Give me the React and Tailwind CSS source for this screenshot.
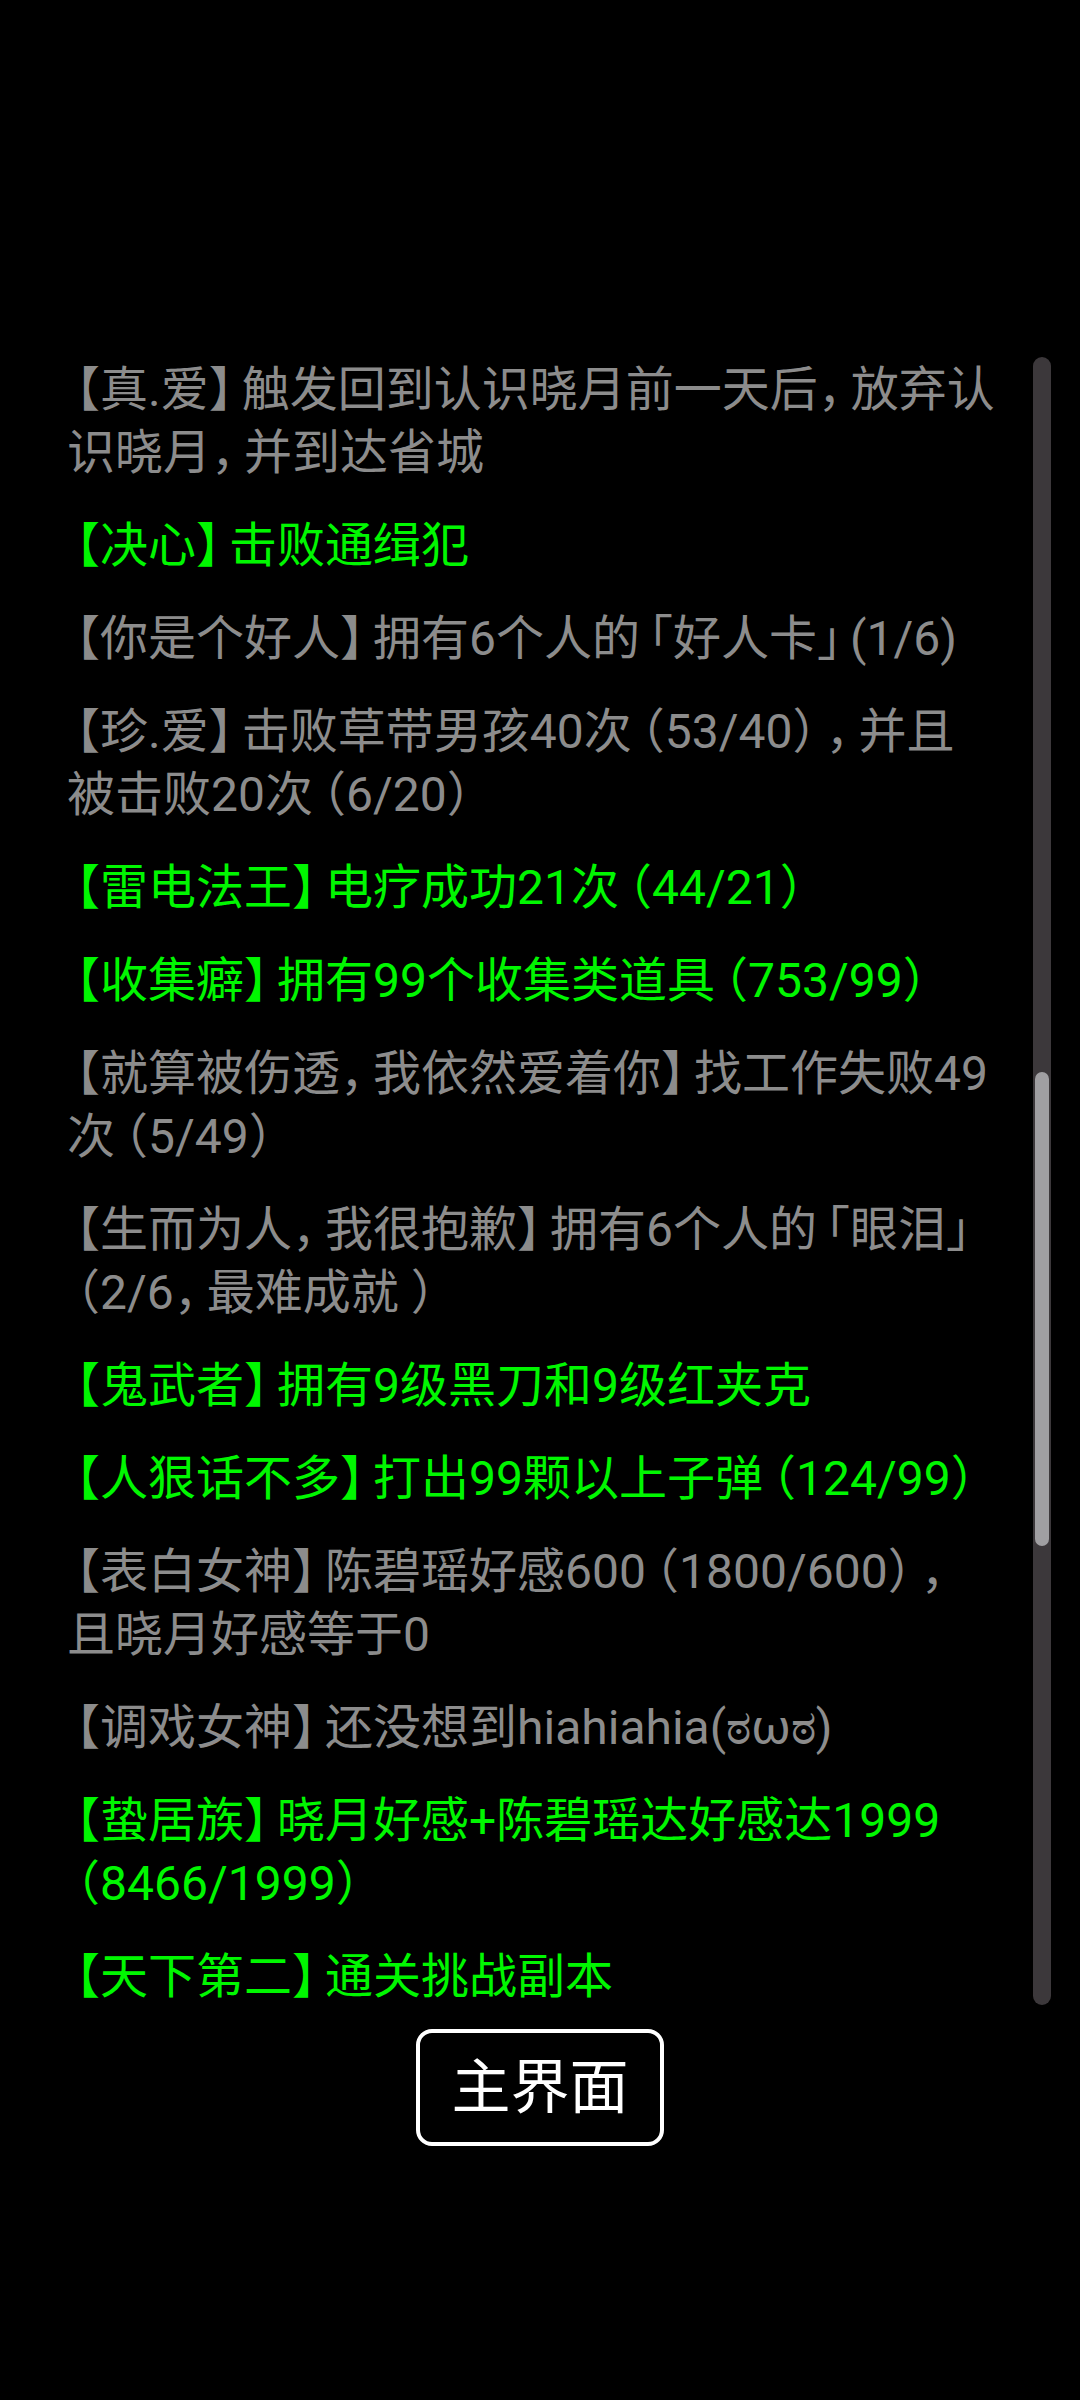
import React from "react";

const achievements = [
  { text: "【真.爱】触发回到认识晓月前一天后，放弃认识晓月，并到达省城", done: false },
  { text: "【决心】击败通缉犯", done: true },
  { text: "【你是个好人】拥有6个人的「好人卡」(1/6)", done: false },
  { text: "【珍.爱】击败草带男孩40次（53/40），并且被击败20次（6/20）", done: false },
  { text: "【雷电法王】电疗成功21次（44/21）", done: true },
  { text: "【收集癖】拥有99个收集类道具（753/99）", done: true },
  { text: "【就算被伤透，我依然爱着你】找工作失败49次（5/49）", done: false },
  { text: "【生而为人，我很抱歉】拥有6个人的「眼泪」（2/6，最难成就 ）", done: false },
  { text: "【鬼武者】拥有9级黑刀和9级红夹克", done: true },
  { text: "【人狠话不多】打出99颗以上子弹（124/99）", done: true },
  { text: "【表白女神】陈碧瑶好感600（1800/600），且晓月好感等于0", done: false },
  { text: "【调戏女神】还没想到hiahiahia(ಠωಠ)", done: false },
  { text: "【蛰居族】晓月好感+陈碧瑶达好感达1999（8466/1999）", done: true },
  { text: "【天下第二】通关挑战副本", done: true },
];

const font = { fontFamily: 'Roboto, "Noto Sans CJK SC", "Noto Sans", sans-serif' };

const OPEN = "【「（";
const CLOSE = "】」），";

// the phone font draws these brackets/commas narrower than a full em
function renderText(text) {
  const out = [];
  let buf = "";
  [...text].forEach((ch, i) => {
    if (OPEN.includes(ch) || CLOSE.includes(ch)) {
      if (buf) out.push(buf);
      buf = "";
      out.push(
        <span
          key={i}
          className={
            OPEN.includes(ch)
              ? "[font-feature-settings:'halt'] pl-[9px]"
              : "[font-feature-settings:'halt'] pr-[9px]"
          }
        >
          {ch}
        </span>
      );
    } else {
      buf += ch;
    }
  });
  if (buf) out.push(buf);
  return out;
}

export default function App() {
  return (
    <div className="w-[1080px] h-[2400px] bg-black overflow-hidden" style={font}>
      <div className="relative pt-[358px]">
        {/* scroll track + thumb */}
        <div className="absolute left-[1033px] top-[357px] w-[18px] h-[1648px] rounded-full bg-[#3c383b]">
          <div className="absolute left-[2px] top-[715px] w-[14px] h-[474px] rounded-full bg-[#a09fa2]" />
        </div>

        <div className="flex flex-col gap-[30px] pl-[67px] w-[999px]">
          {achievements.map((a, i) => (
            <p
              key={i}
              className={
                "text-[48px] leading-[63px] [text-spacing-trim:space-all] " +
                (a.done ? "text-[#00f700]" : "text-[#8c8c8c]")
              }
            >
              {renderText(a.text)}
            </p>
          ))}
        </div>
      </div>

      <div className="flex justify-center mt-[21px]">
        <button className="w-[248px] h-[117px] border-4 border-white rounded-[16px] flex items-center justify-center text-white text-[59px] leading-none">
          主界面
        </button>
      </div>
    </div>
  );
}
